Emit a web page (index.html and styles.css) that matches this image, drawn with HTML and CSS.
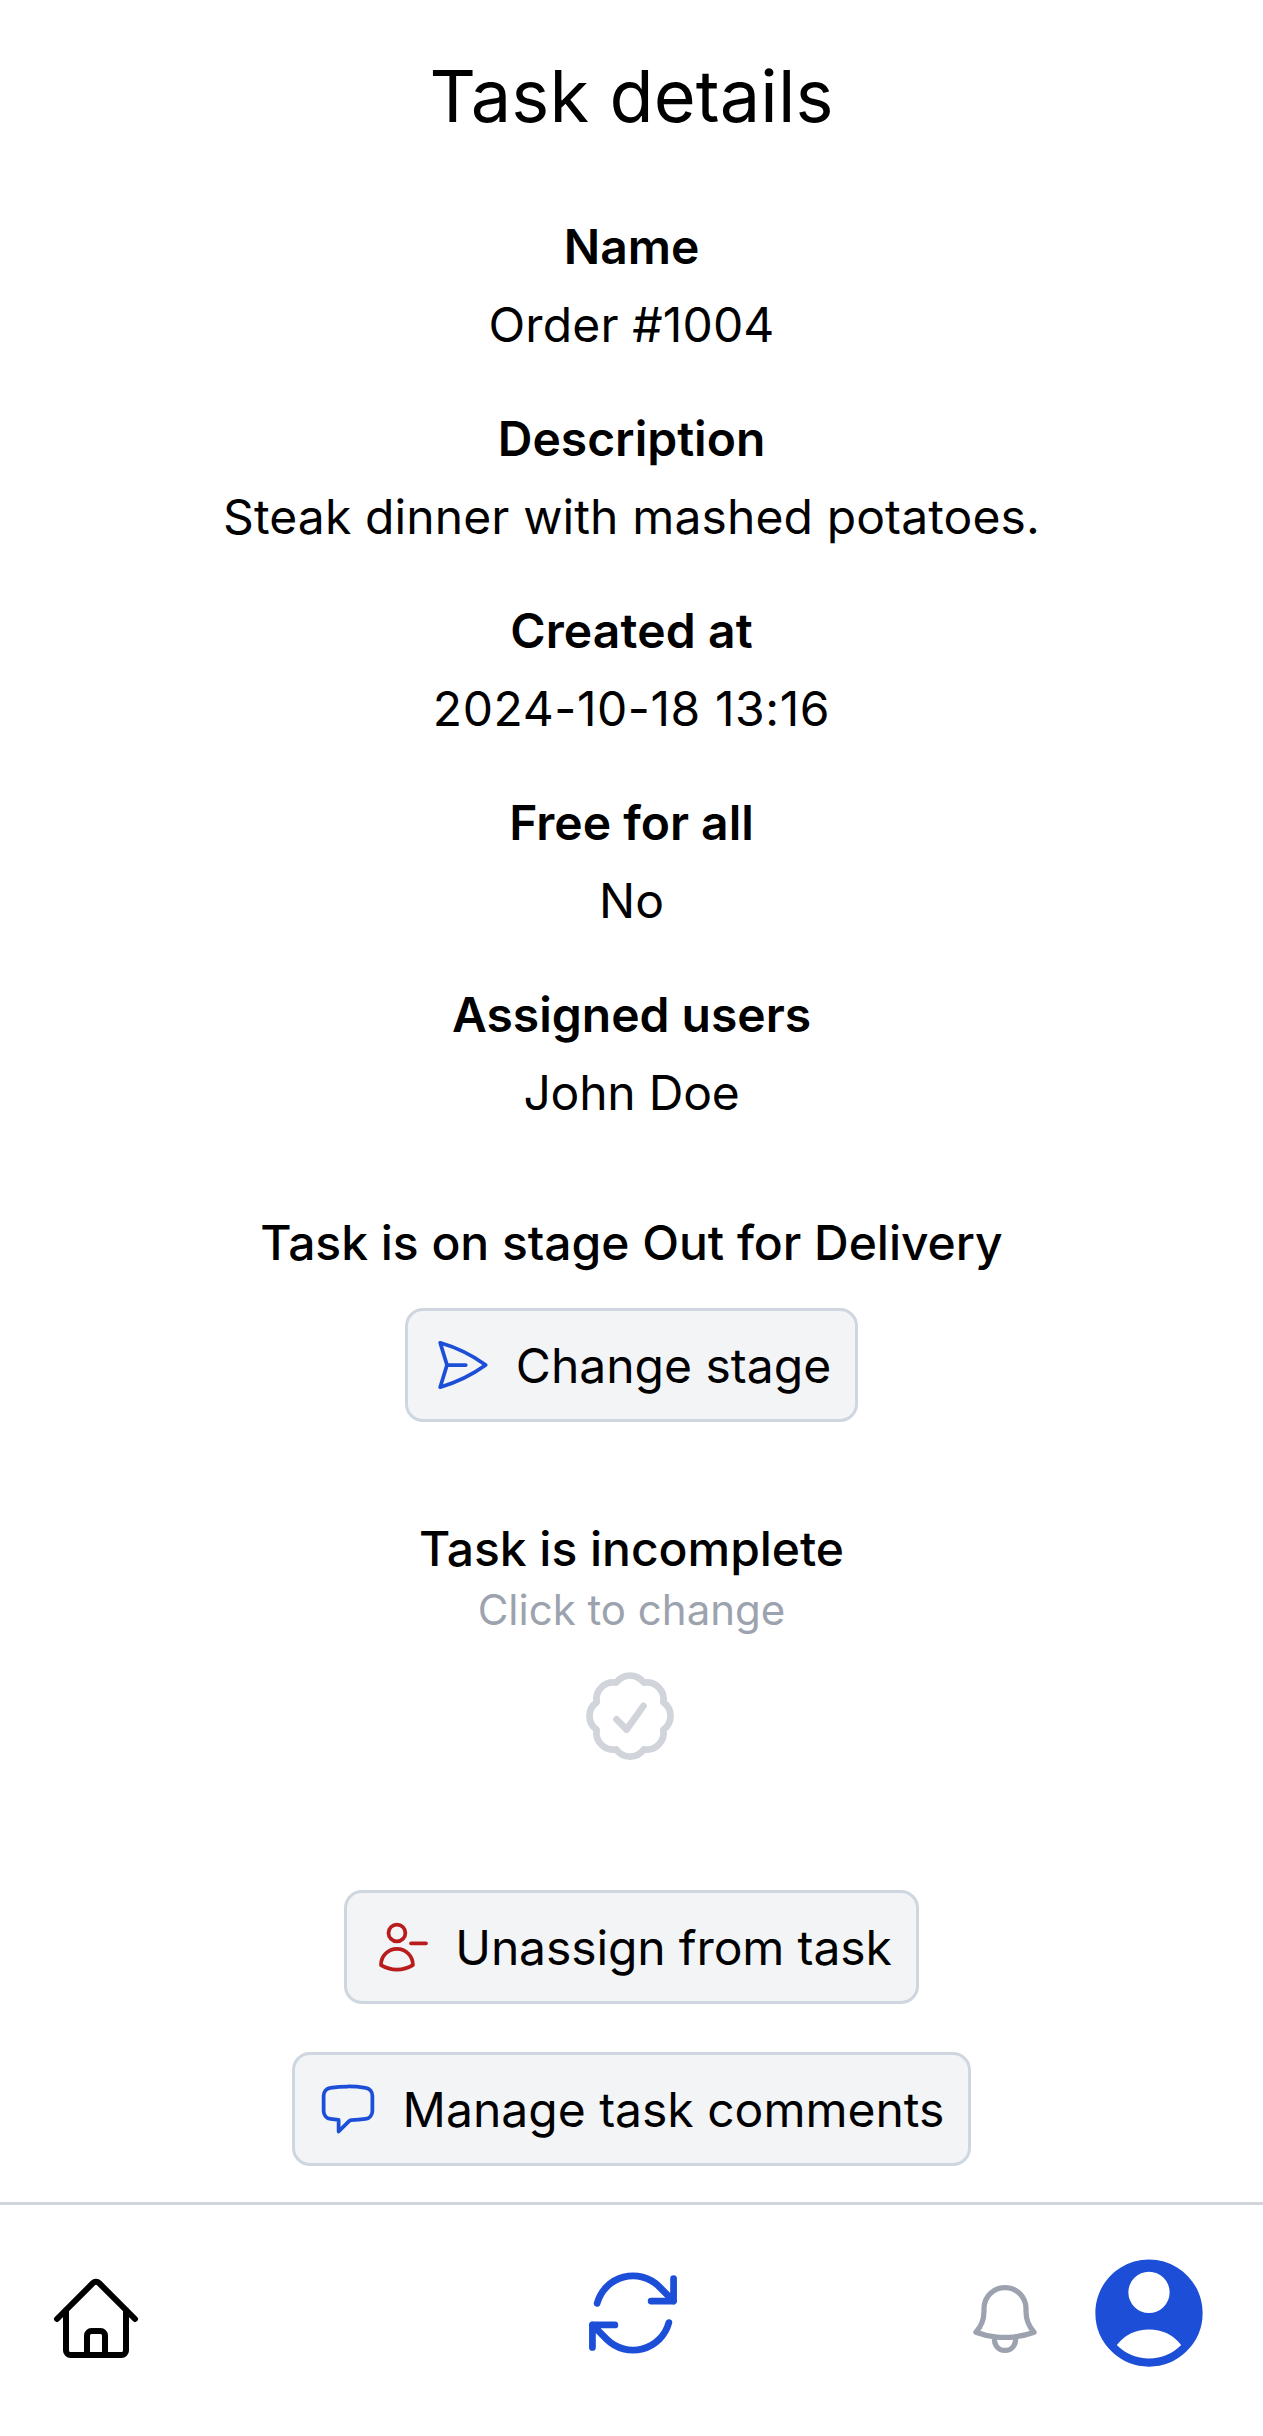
FILE: index.html
```html
<!DOCTYPE html>
<html lang="en">
<head>
<meta charset="utf-8">
<title>Task details</title>
<link rel="stylesheet" href="styles.css">
</head>
<body>
<main class="page">
  <h1 class="title">Task details</h1>
  <dl class="details">
    <div class="field"><dt>Name</dt><dd class="order">Order #1004</dd></div>
    <div class="field"><dt>Description</dt><dd class="description">Steak dinner with mashed potatoes.</dd></div>
    <div class="field"><dt class="created">Created at</dt><dd class="date">2024-10-18 13:16</dd></div>
    <div class="field"><dt>Free for all</dt><dd>No</dd></div>
    <div class="field"><dt>Assigned users</dt><dd class="users">John Doe</dd></div>
  </dl>
  <section class="stage">
    <h2 class="heading">Task is on stage Out for Delivery</h2>
    <button class="button" type="button">
      <svg class="icon icon-blue" viewBox="0 0 24 24"><path d="M6 12 3.269 3.125A59.769 59.769 0 0 1 21.485 12 59.768 59.768 0 0 1 3.27 20.875L5.999 12Zm0 0h7.5"/></svg>
      <span class="label">Change stage</span>
    </button>
  </section>
  <section class="status">
    <h2 class="heading">Task is incomplete</h2>
    <p class="hint">Click to change</p>
    <svg class="icon badge" viewBox="0 0 24 24"><path d="M9 12.75 11.25 15 15 9.75M21 12c0 1.268-.63 2.39-1.593 3.068a3.745 3.745 0 0 1-1.043 3.296 3.745 3.745 0 0 1-3.296 1.043A3.745 3.745 0 0 1 12 21c-1.268 0-2.39-.63-3.068-1.593a3.746 3.746 0 0 1-3.296-1.043 3.745 3.745 0 0 1-1.043-3.296A3.745 3.745 0 0 1 3 12c0-1.268.63-2.39 1.593-3.068a3.745 3.745 0 0 1 1.043-3.296 3.746 3.746 0 0 1 3.296-1.043A3.746 3.746 0 0 1 12 3c1.268 0 2.39.63 3.068 1.593a3.746 3.746 0 0 1 3.296 1.043 3.746 3.746 0 0 1 1.043 3.296A3.745 3.745 0 0 1 21 12Z"/></svg>
  </section>
  <section class="actions">
    <button class="button unassign" type="button">
      <svg class="icon icon-red" viewBox="0 0 24 24"><path d="M22 10.5h-6m-2.25-4.125a3.375 3.375 0 1 1-6.75 0 3.375 3.375 0 0 1 6.75 0ZM4 19.235v-.11a6.375 6.375 0 0 1 12.75 0v.109A12.318 12.318 0 0 1 10.374 21c-2.331 0-4.512-.645-6.374-1.766Z"/></svg>
      <span class="label">Unassign from task</span>
    </button>
    <button class="button" type="button">
      <svg class="icon icon-blue icon-comment" viewBox="0 0 24 24"><path d="M2.25 12.76c0 1.6 1.123 2.994 2.707 3.227 1.087.16 2.185.283 3.293.369V21l4.076-4.076a1.526 1.526 0 0 1 1.037-.443 48.282 48.282 0 0 0 5.68-.494c1.584-.233 2.707-1.626 2.707-3.228V6.741c0-1.602-1.123-2.995-2.707-3.228A48.394 48.394 0 0 0 12 3c-2.392 0-4.744.175-7.043.513C3.373 3.746 2.25 5.14 2.25 6.741v6.018Z"/></svg>
      <span class="label">Manage task comments</span>
    </button>
  </section>
</main>
<nav class="navbar">
  <svg class="icon nav-home" viewBox="0 0 24 24"><path d="m2.25 12 8.954-8.955c.44-.439 1.152-.439 1.591 0L21.75 12M4.5 9.75v10.125c0 .621.504 1.125 1.125 1.125H9.75v-4.875c0-.621.504-1.125 1.125-1.125h2.25c.621 0 1.125.504 1.125 1.125V21h4.125c.621 0 1.125-.504 1.125-1.125V9.75M8.25 21h8.25"/></svg>
  <svg class="icon icon-blue nav-refresh" viewBox="0 0 24 24"><path d="M16.023 9.348h4.992v-.001M2.985 19.644v-4.992m0 0h4.992m-4.993 0 3.181 3.183a8.25 8.25 0 0 0 13.803-3.7M4.031 9.865a8.25 8.25 0 0 1 13.803-3.7l3.181 3.182m0-4.991v4.99"/></svg>
  <div class="nav-account">
    <svg class="icon nav-bell" viewBox="0 0 24 24"><path d="M14.857 17.082a23.848 23.848 0 0 0 5.454-1.31A8.967 8.967 0 0 1 18 9.75V9A6 6 0 0 0 6 9v.75a8.967 8.967 0 0 1-2.312 6.022c1.733.64 3.56 1.085 5.455 1.31m5.714 0a24.255 24.255 0 0 1-5.714 0m5.714 0a3 3 0 1 1-5.714 0"/></svg>
    <svg class="nav-user" viewBox="0 0 24 24"><path fill-rule="evenodd" clip-rule="evenodd" d="M18.685 19.097A9.723 9.723 0 0 0 21.75 12c0-5.385-4.365-9.75-9.75-9.75S2.25 6.615 2.25 12a9.723 9.723 0 0 0 3.065 7.097A9.716 9.716 0 0 0 12 21.75a9.716 9.716 0 0 0 6.685-2.653Zm-12.54-1.285A7.486 7.486 0 0 1 12 15a7.486 7.486 0 0 1 5.855 2.812A8.224 8.224 0 0 1 12 20.25a8.224 8.224 0 0 1-5.855-2.438ZM15.75 8.25a3.75 3.75 0 1 1-7.5 0 3.75 3.75 0 0 1 7.5 0Z"/></svg>
  </div>
</nav>
</body>
</html>
```
FILE: styles.css
```css
* {
  box-sizing: border-box;
  margin: 0;
  padding: 0;
}

body {
  display: flex;
  flex-direction: column;
  height: 2436px;
  background: #fff;
  color: #000;
  font: 400 48px/72px Inter, sans-serif;
}

.page {
  flex: 1;
  display: flex;
  flex-direction: column;
  align-items: center;
  padding-top: 48px;
  text-align: center;
}

.title {
  font-size: 72px;
  font-weight: 400;
  line-height: 96px;
  letter-spacing: 0.12px;
}

.details {
  display: flex;
  flex-direction: column;
  gap: 42px;
  margin-top: 67px;
}

.field {
  display: flex;
  flex-direction: column;
  gap: 6px;
}

.field dt {
  font-weight: 600;
}

.order,
.field .created {
  letter-spacing: 0.15px;
}

.description {
  letter-spacing: 0.12px;
}

.date {
  letter-spacing: 0.58px;
}

.users {
  letter-spacing: -0.2px;
}

.heading {
  font-size: 48px;
  font-weight: 500;
  letter-spacing: -0.03px;
}

.stage,
.status,
.actions {
  display: flex;
  flex-direction: column;
  align-items: center;
}

.stage {
  gap: 29px;
  margin-top: 78px;
}

.status {
  margin-top: 91px;
}

.hint {
  margin: -5px 0 4px;
  color: #9ca3af;
  font-size: 42px;
  line-height: 60px;
}

.actions {
  gap: 48px;
  margin-top: 120px;
}

.button {
  display: flex;
  align-items: center;
  gap: 24px;
  padding: 18px 24px;
  border: 3px solid #ced6df;
  border-radius: 18px;
  background: #f3f4f6;
  color: inherit;
  font: inherit;
}

.label {
  padding-top: 2px;
  line-height: 70px;
}

.unassign {
  letter-spacing: -0.12px;
}

.icon {
  width: 60px;
  height: 60px;
  fill: none;
  stroke: currentColor;
  stroke-width: 1.5;
  stroke-linecap: round;
  stroke-linejoin: round;
}

.icon-blue {
  color: #1d4ed8;
}

.icon-red {
  color: #b91c1c;
}

.icon-comment {
  margin: 0 1px 0 -1px;
}

.badge {
  width: 108px;
  height: 108px;
  margin: 18px 3px 0 0;
  color: #d1d5db;
}

.navbar {
  display: grid;
  grid-template-columns: 1fr 108px 1fr;
  align-items: center;
  height: 234px;
  padding: 0 48px 15px;
  border-top: 3px solid #d1d5db;
}

.nav-home {
  width: 96px;
  height: 96px;
  margin-top: 12px;
}

.nav-refresh {
  width: 108px;
  height: 108px;
  margin-left: 1.5px;
}

.nav-account {
  display: flex;
  align-items: center;
  justify-content: flex-end;
  gap: 36px;
}

.nav-bell {
  width: 84px;
  height: 84px;
  margin-top: 12px;
  color: #9ca3af;
}

.nav-user {
  width: 132px;
  height: 132px;
  fill: #1d4ed8;
}
```
